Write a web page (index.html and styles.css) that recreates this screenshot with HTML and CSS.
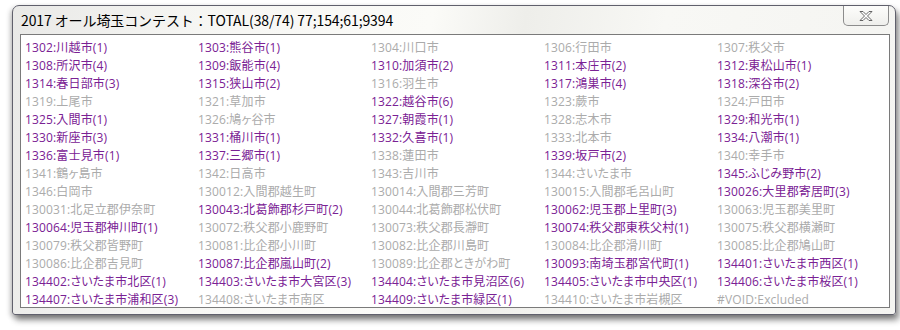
FILE: index.html
```html
<!DOCTYPE html>
<html lang="ja">
<head>
<meta charset="utf-8">
<link rel="stylesheet" href="styles.css">
</head>
<body>
<div class="window">
  <div class="titlebar">
    <div class="title">2017 オール埼玉コンテスト：TOTAL(38/74) 77;154;61;9394</div>
    <div class="close">
      <svg width="16" height="12" viewBox="0 0 16 12"><path d="M2 1.5h3l3 3 3-3h3l-4.5 4.5 4.5 4.5h-3l-3-3-3 3h-3l4.5-4.5z" fill="#fff" stroke="#555" stroke-width="0.9" stroke-linejoin="round"/></svg>
    </div>
  </div>
  <div class="list">
    <span class="a">1302:川越市(1)</span><span class="a">1303:熊谷市(1)</span><span class="g">1304:川口市</span><span class="g">1306:行田市</span><span class="g">1307:秩父市</span>
    <span class="a">1308:所沢市(4)</span><span class="a">1309:飯能市(4)</span><span class="a">1310:加須市(2)</span><span class="a">1311:本庄市(2)</span><span class="a">1312:東松山市(1)</span>
    <span class="a">1314:春日部市(3)</span><span class="a">1315:狭山市(2)</span><span class="g">1316:羽生市</span><span class="a">1317:鴻巣市(4)</span><span class="a">1318:深谷市(2)</span>
    <span class="g">1319:上尾市</span><span class="g">1321:草加市</span><span class="a">1322:越谷市(6)</span><span class="g">1323:蕨市</span><span class="g">1324:戸田市</span>
    <span class="a">1325:入間市(1)</span><span class="g">1326:鳩ヶ谷市</span><span class="a">1327:朝霞市(1)</span><span class="g">1328:志木市</span><span class="a">1329:和光市(1)</span>
    <span class="a">1330:新座市(3)</span><span class="a">1331:桶川市(1)</span><span class="a">1332:久喜市(1)</span><span class="g">1333:北本市</span><span class="a">1334:八潮市(1)</span>
    <span class="a">1336:富士見市(1)</span><span class="a">1337:三郷市(1)</span><span class="g">1338:蓮田市</span><span class="a">1339:坂戸市(2)</span><span class="g">1340:幸手市</span>
    <span class="g">1341:鶴ヶ島市</span><span class="g">1342:日高市</span><span class="g">1343:吉川市</span><span class="g">1344:さいたま市</span><span class="a">1345:ふじみ野市(2)</span>
    <span class="g">1346:白岡市</span><span class="g">130012:入間郡越生町</span><span class="g">130014:入間郡三芳町</span><span class="g">130015:入間郡毛呂山町</span><span class="a">130026:大里郡寄居町(3)</span>
    <span class="g">130031:北足立郡伊奈町</span><span class="a">130043:北葛飾郡杉戸町(2)</span><span class="g">130044:北葛飾郡松伏町</span><span class="a">130062:児玉郡上里町(3)</span><span class="g">130063:児玉郡美里町</span>
    <span class="a">130064:児玉郡神川町(1)</span><span class="g">130072:秩父郡小鹿野町</span><span class="g">130073:秩父郡長瀞町</span><span class="a">130074:秩父郡東秩父村(1)</span><span class="g">130075:秩父郡横瀬町</span>
    <span class="g">130079:秩父郡皆野町</span><span class="g">130081:比企郡小川町</span><span class="g">130082:比企郡川島町</span><span class="g">130084:比企郡滑川町</span><span class="g">130085:比企郡鳩山町</span>
    <span class="g">130086:比企郡吉見町</span><span class="a">130087:比企郡嵐山町(2)</span><span class="g">130089:比企郡ときがわ町</span><span class="a">130093:南埼玉郡宮代町(1)</span><span class="a">134401:さいたま市西区(1)</span>
    <span class="a">134402:さいたま市北区(1)</span><span class="a">134403:さいたま市大宮区(3)</span><span class="a">134404:さいたま市見沼区(6)</span><span class="a">134405:さいたま市中央区(1)</span><span class="a">134406:さいたま市桜区(1)</span>
    <span class="a">134407:さいたま市浦和区(3)</span><span class="g">134408:さいたま市南区</span><span class="a">134409:さいたま市緑区(1)</span><span class="g">134410:さいたま市岩槻区</span><span class="g">#VOID:Excluded</span>
  </div>
</div>
</body>
</html>
```

FILE: styles.css
```css
html, body {
  margin: 0;
  padding: 0;
  background: #ffffff;
}
body {
  width: 900px;
  height: 330px;
  overflow: hidden;
  font-family: "Noto Sans CJK JP", "Noto Sans", sans-serif;
}
.window {
  margin: 5px 0 0 12px;
  width: 882px;
  height: 308px;
  border: 1px solid #60606c;
  border-radius: 7px 7px 3px 3px;
  background: linear-gradient(100deg, #e9e9e7 0%, #f6f6f3 20%, #fbfbf8 45%, #eeeeea 55%, #f8f8f5 70%, #f4f4f1 100%);
  box-shadow: 3px 5px 6px rgba(0, 0, 0, 0.45), -2px 2px 5px rgba(0, 0, 0, 0.2);
  display: flex;
  flex-direction: column;
}
.titlebar {
  height: 28px;
  display: flex;
  align-items: flex-start;
  justify-content: space-between;
}
.title {
  font-size: 14px;
  line-height: 29px;
  padding-left: 8px;
  color: #000;
  letter-spacing: -0.1px;
}
.close {
  width: 44px;
  height: 19px;
  margin-right: 6px;
  border: 1px solid #8c8c8c;
  border-top: none;
  border-radius: 0 0 5px 5px;
  background: linear-gradient(#fdfdfb, #efefec);
  display: flex;
  align-items: center;
  justify-content: center;
}
.list {
  margin: 0 5px 6px 7px;
  flex: 1;
  border: 1px solid #7a7a7a;
  background: #fff;
  padding: 4px 0 0 4px;
  display: grid;
  grid-template-columns: repeat(5, 173px);
  grid-auto-rows: 18px;
  font-family: "Open Sans", "Noto Sans CJK JP", sans-serif;
  font-size: 12px;
  line-height: 18px;
  letter-spacing: 0.15px;
  font-feature-settings: "palt" 1;
  overflow: hidden;
  white-space: nowrap;
}
.a {
  color: #7a2194;
}
.g {
  color: #ababab;
}
```
